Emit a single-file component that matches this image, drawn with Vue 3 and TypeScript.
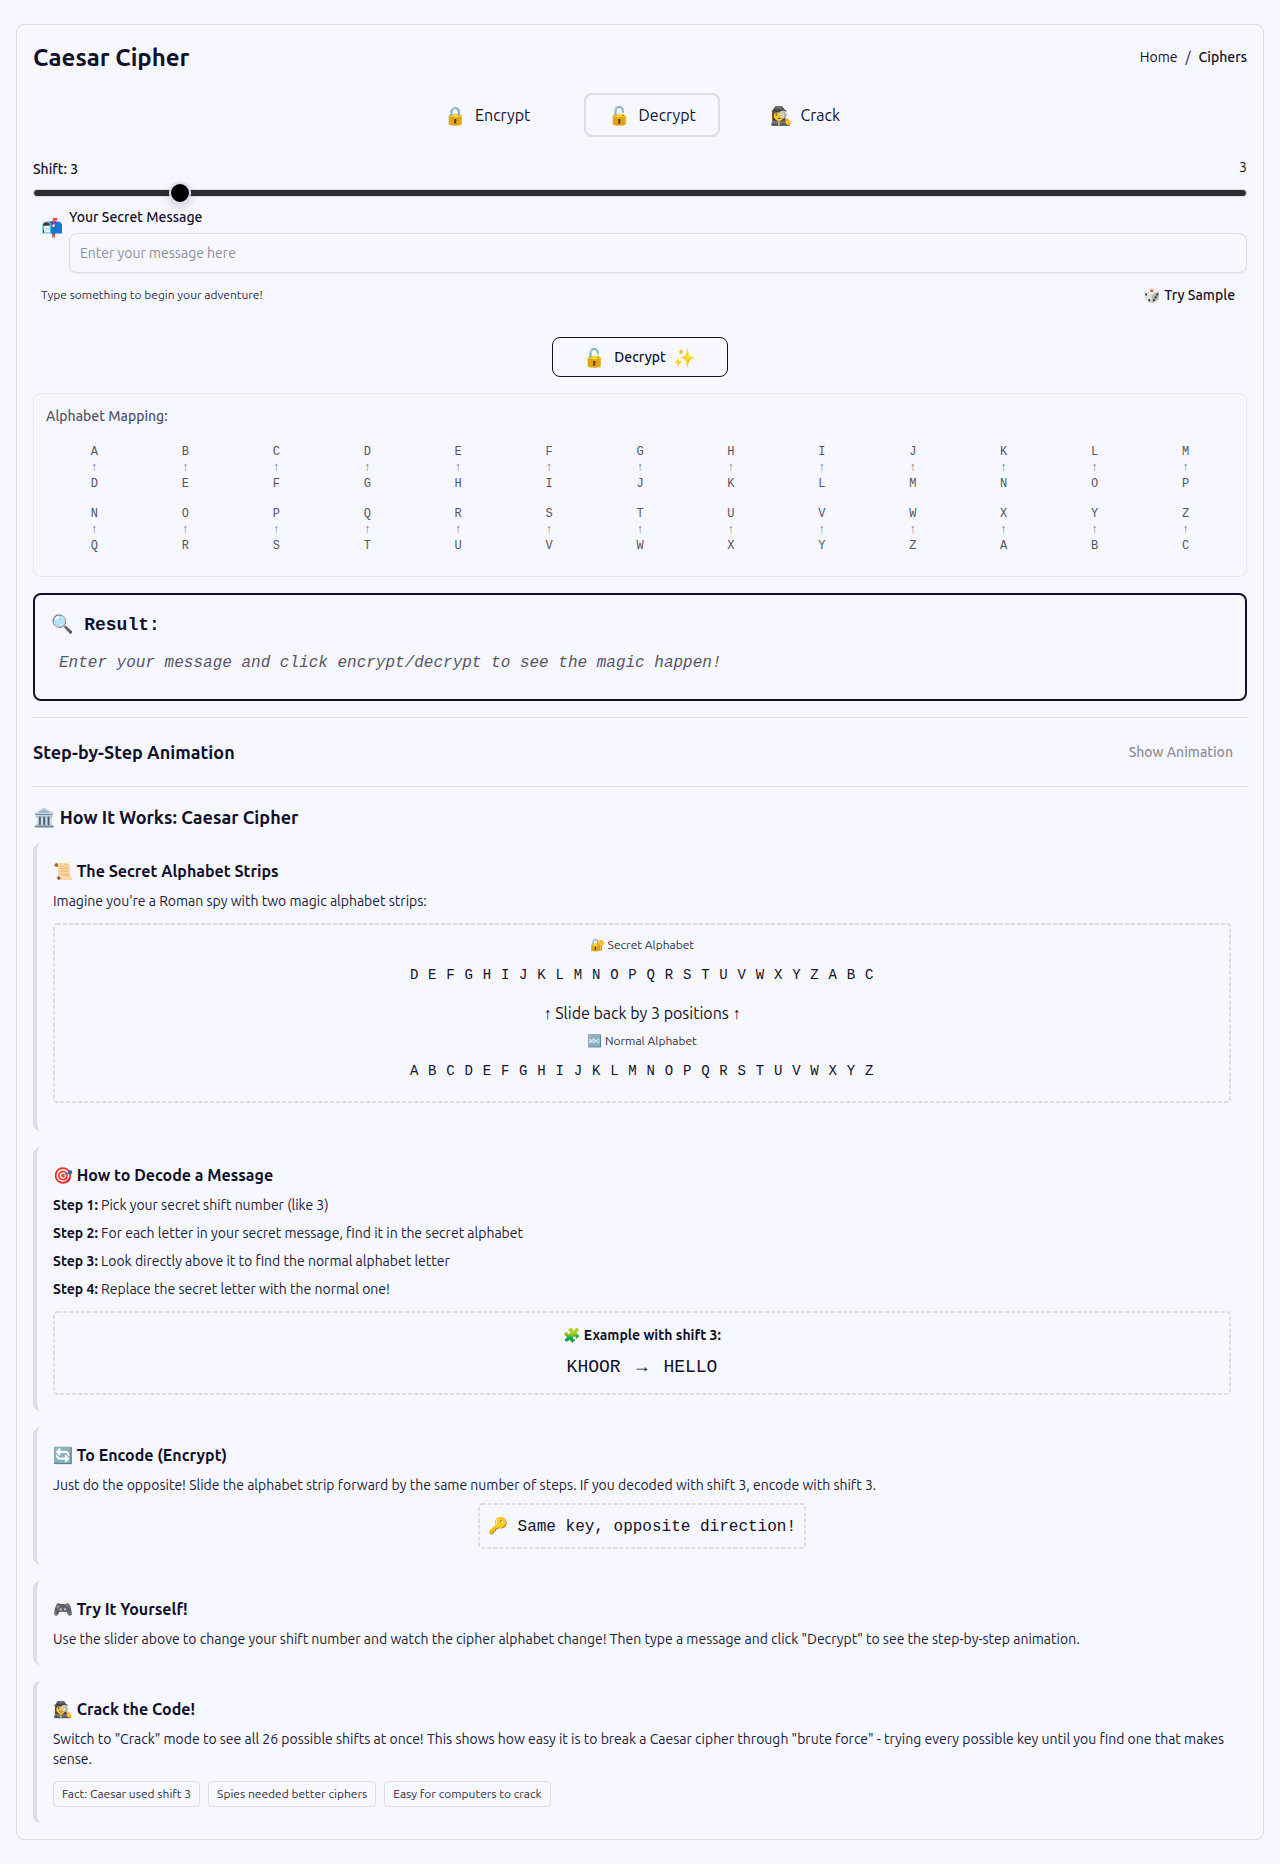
<script setup lang="ts">
import { computed, ref } from 'vue'

const letters = 'ABCDEFGHIJKLMNOPQRSTUVWXYZ'.split('')
const shift = ref(3)
const message = ref('')

const shifted = computed(() => letters.map((_, i) => letters[(i + shift.value) % 26]))
const thumbLeft = computed(() => `calc(${(shift.value / 26) * 100}% - 4.5px)`)

const modes = [
  { id: 'encrypt', icon: '🔒', label: 'Encrypt' },
  { id: 'decrypt', icon: '🔓', label: 'Decrypt' },
  { id: 'crack', icon: '🕵️‍♀️', label: 'Crack' },
]
const mode = ref('decrypt')

const steps = [
  'Pick your secret shift number (like 3)',
  'For each letter in your secret message, find it in the secret alphabet',
  'Look directly above it to find the normal alphabet letter',
  'Replace the secret letter with the normal one!',
]
const facts = ['Fact: Caesar used shift 3', 'Spies needed better ciphers', 'Easy for computers to crack']
</script>

<template>
  <main class="card">
    <header class="head">
      <h1>Caesar Cipher</h1>
      <nav class="crumbs"><span>Home</span><span>/</span><b>Ciphers</b></nav>
    </header>

    <div class="tabs">
      <button v-for="m in modes" :key="m.id" :class="['tab', m.id, { active: m.id === mode }]" @click="mode = m.id">
        <span class="emoji">{{ m.icon }}</span><span>{{ m.label }}</span>
      </button>
    </div>

    <div class="shift-row"><label>Shift: {{ shift }}</label><span>{{ shift }}</span></div>
    <div class="slider"><div class="track"></div><div class="thumb" :style="{ left: thumbLeft }"></div></div>

    <div class="message">
      <span class="emoji mailbox">📬</span>
      <div class="field">
        <label>Your Secret Message</label>
        <input v-model="message" placeholder="Enter your message here" />
      </div>
    </div>
    <div class="hint"><span class="small">Type something to begin your adventure!</span><span class="sample">🎲 Try Sample</span></div>

    <button class="go"><span class="emoji">🔓</span><span class="go-label">Decrypt</span><span class="emoji">✨</span></button>

    <section class="mapping">
      <h4>Alphabet Mapping:</h4>
      <div class="grid">
        <div v-for="(l, i) in letters" :key="l" class="cell">
          <span>{{ l }}</span><span class="arrow">↑</span><span>{{ shifted[i] }}</span>
        </div>
      </div>
    </section>

    <section class="result">
      <h3><span class="emoji">🔍</span><span>Result:</span></h3>
      <p>Enter your message and click encrypt/decrypt to see the magic happen!</p>
    </section>

    <section class="animation"><h2>Step-by-Step Animation</h2><span>Show Animation</span></section>

    <h2 class="how">🏛️ How It Works: Caesar Cipher</h2>

    <div class="panels">
      <section class="panel strips-panel">
        <h3>📜 The Secret Alphabet Strips</h3>
        <p>Imagine you're a Roman spy with two magic alphabet strips:</p>
        <div class="dashed strips">
          <svg class="outline"><rect x="1" y="1" rx="3" /></svg>
          <div class="small">🔐 Secret Alphabet</div>
          <div class="strip">{{ shifted.join(' ') }}</div>
          <div class="slide">↑ Slide back by {{ shift }} positions ↑</div>
          <div class="small">🔤 Normal Alphabet</div>
          <div class="strip">{{ letters.join(' ') }}</div>
        </div>
      </section>

      <section class="panel decode-panel">
        <h3>🎯 How to Decode a Message</h3>
        <p v-for="(s, i) in steps" :key="s"><strong>Step {{ i + 1 }}:</strong> {{ s }}</p>
        <div class="dashed example">
          <svg class="outline"><rect x="1" y="1" rx="3" /></svg>
          <strong>🧩 Example with shift {{ shift }}:</strong>
          <div class="words"><span>KHOOR</span><span>→</span><span>HELLO</span></div>
        </div>
      </section>

      <section class="panel encode-panel">
        <h3>🔄 To Encode (Encrypt)</h3>
        <p>Just do the opposite! Slide the alphabet strip forward by the same number of steps. If you decoded with shift {{ shift }}, encode with shift {{ shift }}.</p>
        <div class="dashed key"><svg class="outline"><rect x="1" y="1" rx="3" /></svg>🔑 Same key, opposite direction!</div>
      </section>

      <section class="panel try-panel">
        <h3>🎮 Try It Yourself!</h3>
        <p>Use the slider above to change your shift number and watch the cipher alphabet change! Then type a message and click "Decrypt" to see the step-by-step animation.</p>
      </section>

      <section class="panel crack-panel">
        <h3>🕵️‍♀️ Crack the Code!</h3>
        <p>Switch to "Crack" mode to see all 26 possible shifts at once! This shows how easy it is to break a Caesar cipher through "brute force" - trying every possible key until you find one that makes sense.</p>
        <div class="facts"><span v-for="f in facts" :key="f">{{ f }}</span></div>
      </section>
    </div>
  </main>
</template>

<style>
body { background: #f7f7ff; }
</style>

<style scoped>
* { box-sizing: border-box; }
h1, h2, h3, h4, p { margin: 0; }
button { font: inherit; color: inherit; background: none; padding: 0; }
.card {
  margin: 24px 16px;
  height: 1816px;
  padding: 16px;
  border: 1px solid #dcdcea;
  border-radius: 8px;
  color: #11112b;
  font: 400 14px/20px Ubuntu, "Noto Sans", "Noto Color Emoji", sans-serif;
}
.head { display: flex; align-items: center; justify-content: space-between; height: 32px; }
h1 { padding-top: 2px; font-size: 24px; line-height: 32px; font-weight: 600; }
.crumbs { display: flex; gap: 8px; }
.crumbs b { font-weight: 500; }
.tabs { display: flex; gap: 30px; margin: 20px 0 22px 386px; }
.tab { display: flex; align-items: center; justify-content: center; gap: 8px; height: 44px; border: 2px solid transparent; border-radius: 8px; font-size: 16px; white-space: nowrap; }
.tab.active { border-color: #dcdcea; }
.encrypt { width: 135px; padding-left: 2px; }
.decrypt { width: 136px; }
.crack { width: 110px; }
.emoji { font-size: 18px; }
.shift-row { display: flex; justify-content: space-between; height: 24px; }
.shift-row label { font-weight: 500; }
.shift-row span { margin-top: -2px; }
.slider { position: relative; height: 20px; padding-top: 6px; }
.track { height: 8px; border: 1px solid #dcdcea; border-radius: 4px; background: #2c2c33; }
.thumb { position: absolute; top: -1px; width: 22px; height: 22px; border: 2px solid #dcdcea; border-radius: 50%; background: #000; box-shadow: 0 4px 8px rgba(17, 17, 43, 0.15); }
.message { display: flex; height: 66px; margin-top: 4px; }
.mailbox { width: 36px; padding: 10px 0 0 8px; }
.field { flex: 1; }
.field label { display: block; height: 26px; font-weight: 500; }
.field input { display: block; width: 100%; height: 40px; padding: 0 10px; border: 1px solid #dcdcea; border-radius: 8px; background: transparent; font: inherit; box-shadow: 0 1px 2px rgba(17, 17, 43, 0.06); outline: none; }
.field input::placeholder { color: #8f8f9f; opacity: 1; }
.hint { display: flex; align-items: center; justify-content: space-between; height: 44px; padding: 0 12px 0 8px; }
.small { font-size: 12px; line-height: 16px; color: #2e2e45; }
.sample { font-weight: 500; }
.go { display: flex; align-items: center; justify-content: center; gap: 8px; width: 176px; height: 40px; margin: 20px auto 16px; border: 1px solid #11112b; border-radius: 8px; }
.go-label { font-weight: 500; }
.mapping { height: 184px; border: 1px solid #e6e6f2; border-radius: 8px; padding: 12px; color: #555568; }
h4 { font-size: 14px; font-weight: 500; line-height: 20px; }
.grid { display: grid; grid-template-columns: repeat(13, 1fr); row-gap: 14px; margin: 18px 3px 0; font: 12px/16px "Liberation Mono", monospace; }
.cell { display: flex; flex-direction: column; align-items: center; }
.arrow { color: #77778a; }
.result { height: 108px; margin-top: 16px; padding: 16px; border: 2px solid #11112b; border-radius: 8px; font-family: "Liberation Mono", "Noto Color Emoji", monospace; }
.result h3 { display: flex; align-items: center; gap: 10.8px; height: 28px; font-size: 18px; font-weight: 700; }
.result p { padding: 14px 8px; font-size: 16px; font-style: italic; color: #555568; }
.animation { display: flex; align-items: center; justify-content: space-between; height: 70px; margin-top: 16px; border: solid #dcdcea; border-width: 1px 0; padding-right: 14px; }
h2 { font-size: 18px; line-height: 28px; font-weight: 600; }
.animation span { font-weight: 500; color: #8d8d9d; }
.how { margin: 16px 0 12px; }
.panels { display: flex; flex-direction: column; gap: 16px; }
.panel { border-left: 4px solid #dcdcea; border-radius: 8px; padding: 16px; }
.panel h3 { height: 24px; font-size: 16px; line-height: 24px; font-weight: 600; margin-bottom: 8px; }
.panel p { margin-bottom: 8px; color: #20203a; }
.strips-panel { height: 288px; }
.decode-panel { height: 264px; }
.encode-panel { height: 138px; }
.try-panel { height: 84px; }
.crack-panel { height: 142px; }
.dashed { position: relative; text-align: center; }
.outline { position: absolute; inset: 0; width: 100%; height: 100%; }
.outline rect { width: calc(100% - 2px); height: calc(100% - 2px); fill: none; stroke: #dcdcea; stroke-width: 2; stroke-dasharray: 4 2; }
strong { font-weight: 600; color: #11112b; }
.strips { height: 180px; margin-top: 12px; padding-top: 14px; }
.strip { height: 52px; padding-top: 12px; font: 14px/20px "Liberation Mono", monospace; letter-spacing: 0.7px; }
.slide { height: 30px; margin-top: -2px; font-size: 16px; }
.example { height: 84px; margin-top: 12px; padding-top: 14px; }
.words { display: flex; justify-content: center; gap: 16px; margin-top: 8px; font: 18px/28px "Liberation Mono", monospace; }
.key { width: 328px; height: 46px; margin: 0 auto; padding-top: 14px; font: 16px/20px "Liberation Mono", "Noto Color Emoji", monospace; white-space: nowrap; }
.facts { display: flex; gap: 8px; margin-top: 12px; }
.facts span { height: 26px; padding: 4px 8px; border: 1px solid #dcdcea; border-radius: 4px; font-size: 12px; line-height: 16px; color: #2e2e45; }
</style>
